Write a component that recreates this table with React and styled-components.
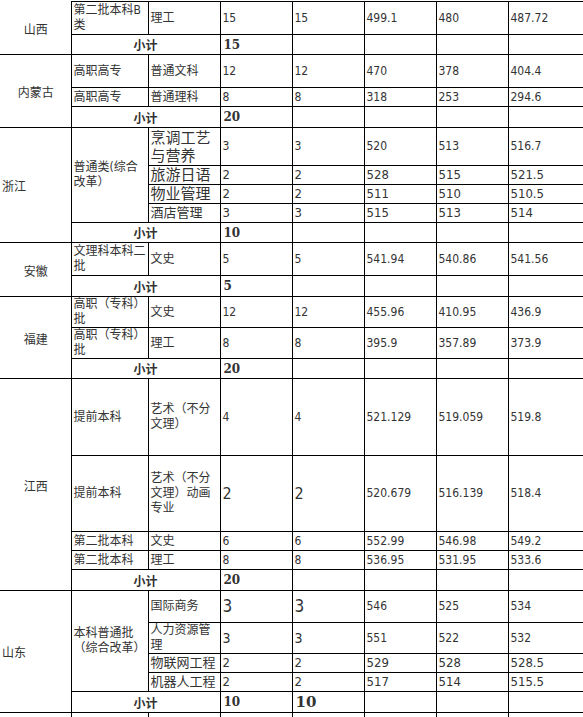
import React from 'react'
import styled, { createGlobalStyle } from 'styled-components'

const GlobalStyle = createGlobalStyle`
  body {
    margin: 0;
    background: #fff;
  }
`

const Viewport = styled.div`
  width: 583px;
  height: 717px;
  overflow: hidden;
  padding-top: 1px;
  box-sizing: border-box;
`

const widths = [71, 77, 72, 72, 72, 72, 72, 152]

const Table = styled.table`
  border-collapse: collapse;
  table-layout: fixed;
  width: ${widths.reduce((a, b) => a + b, 0)}px;
  font-family: "DejaVu Sans Condensed", "Noto Sans CJK SC", sans-serif;
  color: #333;
`

const Row = styled.tr`
  height: ${p => p.$h}px;
`

const Cell = styled.td`
  border: 1px solid #000;
  padding: 0 1px 0 2px;
  font-size: ${p => p.$size || 12}px;
  line-height: ${p => (p.$size ? Math.round(p.$size * 1.22) : 15)}px;
  vertical-align: middle;
  text-align: left;
`

const Province = styled(Cell)`
  border-left: none;
  text-align: ${p => (p.$left ? 'left' : 'center')};
  padding-top: ${p => (p.$left ? 4 : 5)}px;
  ${p => p.$open && 'border-top: none;'}
`

const SubLabel = styled.td`
  border: 1px solid #000;
  padding: 0;
  font-size: 12px;
  font-weight: bold;
  text-align: center;
  vertical-align: middle;
`

const Total = styled.td`
  border: 1px solid #000;
  padding: 0 1px 0 3px;
  font-family: "DejaVu Serif", "Liberation Serif", serif;
  font-weight: bold;
  font-size: ${p => p.$size || 12}px;
  vertical-align: middle;
`

const Empty = styled.td`
  border: 1px solid #000;
`

function Nums({ values, size = [] }) {
  return values.map((v, i) => (
    <Cell key={i} $size={size[i]}>{v}</Cell>
  ))
}

function Subtotal({ value, second, secondSize }) {
  return (
    <>
      <SubLabel colSpan={2}>小计</SubLabel>
      <Total>{value}</Total>
      {second ? <Total $size={secondSize}>{second}</Total> : <Empty />}
      <Empty />
      <Empty />
      <Empty />
    </>
  )
}

const thirteen = [13, 13, 13, 13, 13]

export default function App() {
  return (
    <Viewport>
      <GlobalStyle />
      <Table>
        <colgroup>
          {widths.map((w, i) => <col key={i} style={{ width: w }} />)}
        </colgroup>
        <tbody>
          <Row $h={33}>
            <Province rowSpan={2} $open>山西</Province>
            <Cell>第二批本科B类</Cell>
            <Cell>理工</Cell>
            <Nums values={['15', '15', '499.1', '480', '487.72']} />
          </Row>
          <Row $h={20}>
            <Subtotal value="15" />
          </Row>

          <Row $h={33}>
            <Province rowSpan={3}>内蒙古</Province>
            <Cell>高职高专</Cell>
            <Cell>普通文科</Cell>
            <Nums values={['12', '12', '470', '378', '404.4']} />
          </Row>
          <Row $h={19}>
            <Cell>高职高专</Cell>
            <Cell>普通理科</Cell>
            <Nums values={['8', '8', '318', '253', '294.6']} />
          </Row>
          <Row $h={21}>
            <Subtotal value="20" />
          </Row>

          <Row $h={38}>
            <Province rowSpan={5} $left>浙江</Province>
            <Cell rowSpan={4}>普通类(综合改革）</Cell>
            <Cell $size={15}>烹调工艺与营养</Cell>
            <Nums values={['3', '3', '520', '513', '516.7']} />
          </Row>
          <Row $h={19}>
            <Cell $size={15}>旅游日语</Cell>
            <Nums values={['2', '2', '528', '515', '521.5']} size={thirteen} />
          </Row>
          <Row $h={19}>
            <Cell $size={15}>物业管理</Cell>
            <Nums values={['2', '2', '511', '510', '510.5']} size={thirteen} />
          </Row>
          <Row $h={19}>
            <Cell $size={13}>酒店管理</Cell>
            <Nums values={['3', '3', '515', '513', '514']} size={thirteen} />
          </Row>
          <Row $h={20}>
            <Subtotal value="10" />
          </Row>

          <Row $h={33}>
            <Province rowSpan={2}>安徽</Province>
            <Cell>文理科本科二批</Cell>
            <Cell>文史</Cell>
            <Nums values={['5', '5', '541.94', '540.86', '541.56']} />
          </Row>
          <Row $h={21}>
            <Subtotal value="5" />
          </Row>

          <Row $h={31}>
            <Province rowSpan={3}>福建</Province>
            <Cell>高职（专科）批</Cell>
            <Cell>文史</Cell>
            <Nums values={['12', '12', '455.96', '410.95', '436.9']} />
          </Row>
          <Row $h={31}>
            <Cell>高职（专科）批</Cell>
            <Cell>理工</Cell>
            <Nums values={['8', '8', '395.9', '357.89', '373.9']} />
          </Row>
          <Row $h={20}>
            <Subtotal value="20" />
          </Row>

          <Row $h={77}>
            <Province rowSpan={5}>江西</Province>
            <Cell>提前本科</Cell>
            <Cell>艺术（不分文理）</Cell>
            <Nums values={['4', '4', '521.129', '519.059', '519.8']} />
          </Row>
          <Row $h={76}>
            <Cell>提前本科</Cell>
            <Cell>艺术（不分文理）动画专业</Cell>
            <Nums values={['2', '2', '520.679', '516.139', '518.4']} size={[16, 16]} />
          </Row>
          <Row $h={19}>
            <Cell>第二批本科</Cell>
            <Cell>文史</Cell>
            <Nums values={['6', '6', '552.99', '546.98', '549.2']} />
          </Row>
          <Row $h={19}>
            <Cell>第二批本科</Cell>
            <Cell>理工</Cell>
            <Nums values={['8', '8', '536.95', '531.95', '533.6']} />
          </Row>
          <Row $h={21}>
            <Subtotal value="20" />
          </Row>

          <Row $h={32}>
            <Province rowSpan={5} $left>山东</Province>
            <Cell rowSpan={4}>本科普通批（综合改革）</Cell>
            <Cell>国际商务</Cell>
            <Nums values={['3', '3', '546', '525', '534']} size={[17, 17]} />
          </Row>
          <Row $h={30}>
            <Cell>人力资源管理</Cell>
            <Nums values={['3', '3', '551', '522', '532']} size={[14, 14]} />
          </Row>
          <Row $h={19}>
            <Cell $size={13}>物联网工程</Cell>
            <Nums values={['2', '2', '529', '528', '528.5']} size={thirteen} />
          </Row>
          <Row $h={19}>
            <Cell $size={13}>机器人工程</Cell>
            <Nums values={['2', '2', '517', '514', '515.5']} size={thirteen} />
          </Row>
          <Row $h={21}>
            <Subtotal value="10" second="10" secondSize={15} />
          </Row>

          <Row $h={20}>
            <Province />
            <Empty />
            <Empty />
            <Empty />
            <Empty />
            <Empty />
            <Empty />
            <Empty />
          </Row>
        </tbody>
      </Table>
    </Viewport>
  )
}
